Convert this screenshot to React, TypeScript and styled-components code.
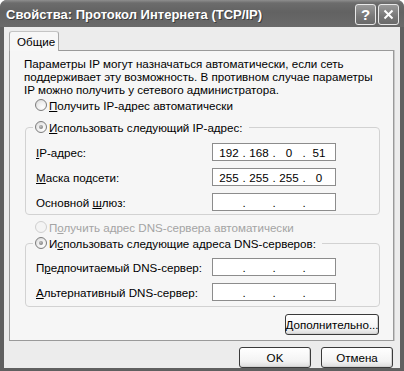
import React from "react";
import styled, { createGlobalStyle } from "styled-components";

const GlobalStyle = createGlobalStyle`
  html, body {
    margin: 0;
    padding: 0;
    background: #ffffff;
  }
  body {
    font-family: "Liberation Sans", Arial, sans-serif;
    font-size: 11.6px;
    color: #000;
  }
`;

const Window = styled.div`
  width: 404px;
  height: 371px;
  box-sizing: border-box;
  display: flex;
  flex-direction: column;
  background: #606060;
  border-radius: 7px 7px 0 0;
  overflow: hidden;
`;

const TitleBar = styled.div`
  height: 27px;
  flex: none;
  display: flex;
  align-items: center;
  padding: 0 5px 0 6px;
  background: linear-gradient(#8e8e8e 0, #6c6c6c 3px, #626262 45%, #6a6a6a 100%);
`;

const Title = styled.div`
  flex: 1;
  color: #fff;
  font-weight: bold;
  font-size: 13px;
  padding-top: 2px;
  text-shadow: 1px 1px 0 #3c3c3c;
  white-space: nowrap;
`;

const CaptionButton = styled.div`
  width: 19px;
  height: 19px;
  margin-left: 2px;
  margin-top: 2px;
  border: 1px solid #e8e8e8;
  border-radius: 3px;
  background: linear-gradient(#9a9a9a, #777 60%, #6a6a6a);
  display: flex;
  align-items: center;
  justify-content: center;
  color: #fff;
  font-weight: bold;
  font-size: 15px;
`;

const Body = styled.div`
  flex: 1;
  margin: 0 4px 3px 4px;
  background: #ececec;
  padding: 4px 6px 0 5px;
  display: flex;
  flex-direction: column;
`;

const TabRow = styled.div`
  display: flex;
  height: 19px;
`;

const Tab = styled.div`
  position: relative;
  z-index: 1;
  width: 50px;
  height: 20px;
  box-sizing: border-box;
  border: 1px solid #a8a8a8;
  border-bottom: none;
  border-top-color: #c4c4c4;
  border-radius: 3px 3px 0 0;
  background: #f7f7f7;
  padding-left: 7px;
  line-height: 19px;
`;

const Panel = styled.div`
  border: 1px solid #9a9a9a;
  box-shadow: 1px 0 0 #c8c8c8;
  background: #f6f6f6;
  padding: 6px 13px 5px 14px;
  display: flex;
  flex-direction: column;
  height: 291px;
  box-sizing: border-box;
`;

const Text = styled.p`
  margin: 0;
  line-height: 13px;
`;

const RadioRow = styled.div<{ $gap?: number; $disabled?: boolean }>`
  display: flex;
  align-items: center;
  gap: 2px;
  height: 14px;
  margin-top: ${(p) => p.$gap ?? 0}px;
  padding-left: 11px;
  color: ${(p) => (p.$disabled ? "#a4a4a4" : "#000")};
  white-space: nowrap;
`;

const Circle = styled.span<{ $checked?: boolean; $disabled?: boolean }>`
  width: 12px;
  height: 12px;
  box-sizing: border-box;
  border-radius: 50%;
  border: 1px solid ${(p) => (p.$disabled ? "#cfcfcf" : "#7c7c7c")};
  background: ${(p) =>
    p.$disabled
      ? "#f4f4f4"
      : "radial-gradient(circle at 65% 70%, #fdfdfd 0, #f0f0f0 45%, #d4d4d4 100%)"};
  display: flex;
  align-items: center;
  justify-content: center;
  flex: none;

  &::after {
    content: "";
    display: ${(p) => (p.$checked ? "block" : "none")};
    width: 4px;
    height: 4px;
    border-radius: 50%;
    background: radial-gradient(circle at 40% 35%, #bdbdbd, #6e6e6e);
  }
`;

const Key = styled.span`
  text-decoration: underline;
`;

const Group = styled.fieldset<{ $gap: number; $top: number; $bottom: number }>`
  margin: ${(p) => p.$gap}px 0 0 1px;
  border: 1px solid #d2d2d2;
  border-radius: 4px;
  padding: ${(p) => `${p.$top}px 0 ${p.$bottom}px 7px`};
  min-width: 0;
`;

const Legend = styled.legend`
  padding: 0 6px 0 2px;
  height: 14px;
  display: flex;
  align-items: center;
  gap: 2px;
  white-space: nowrap;
`;

const Rows = styled.div`
  display: flex;
  flex-direction: column;
  gap: 7px;
  padding-left: 3px;
`;

const FieldRow = styled.div`
  display: flex;
  align-items: center;
  height: 18px;
`;

const Label = styled.span`
  width: 176px;
  flex: none;
`;

const IpBox = styled.div`
  width: 124px;
  height: 18px;
  box-sizing: border-box;
  border: 1px solid #8c8c8c;
  background: #fff;
  display: flex;
  align-items: center;
  padding-left: 3px;
`;

const Seg = styled.span`
  width: 26px;
  text-align: center;
`;

const Dot = styled.span`
  width: 4px;
  text-align: center;
`;

const ButtonRow = styled.div<{ $gap: number }>`
  display: flex;
  justify-content: flex-end;
  gap: 10px;
  margin-top: ${(p) => p.$gap}px;
  margin-right: 1px;
`;

const Button = styled.div<{ $width: number }>`
  width: ${(p) => p.$width}px;
  height: 21px;
  box-sizing: border-box;
  border: 1px solid #3a3a3a;
  border-radius: 3px;
  background: linear-gradient(#ffffff, #f3f3f3 70%, #dcdcdc);
  box-shadow: inset -1px -1px 0 #d2d2d2;
  display: flex;
  align-items: center;
  justify-content: center;
`;

const Ip = ({ value }: { value: string[] }) => (
  <IpBox>
    {value.map((s, i) => (
      <React.Fragment key={i}>
        {i > 0 && <Dot>.</Dot>}
        <Seg>{s}</Seg>
      </React.Fragment>
    ))}
  </IpBox>
);

const empty = ["", "", "", ""];

export default function App() {
  return (
    <>
      <GlobalStyle />
      <Window>
        <TitleBar>
          <Title>Свойства: Протокол Интернета (TCP/IP)</Title>
          <CaptionButton>?</CaptionButton>
          <CaptionButton>
            <svg width="11" height="11" viewBox="0 0 11 11">
              <path d="M1.5 1.5 L9.5 9.5 M9.5 1.5 L1.5 9.5" stroke="#fff" strokeWidth="2" />
            </svg>
          </CaptionButton>
        </TitleBar>
        <Body>
          <TabRow>
            <Tab>Общие</Tab>
          </TabRow>
          <Panel>
            <Text>
              Параметры IP могут назначаться автоматически, если сеть
              <br />
              поддерживает эту возможность. В противном случае параметры
              <br />
              IP можно получить у сетевого администратора.
            </Text>
            <RadioRow $gap={2}>
              <Circle />
              <span>
                <Key>П</Key>олучить IP-адрес автоматически
              </span>
            </RadioRow>
            <Group $gap={8} $top={9} $bottom={3}>
              <Legend>
                <Circle $checked />
                <span>
                  <Key>И</Key>спользовать следующий IP-адрес:
                </span>
              </Legend>
              <Rows>
                <FieldRow>
                  <Label>
                    <Key>I</Key>P-адрес:
                  </Label>
                  <Ip value={["192", "168", "0", "51"]} />
                </FieldRow>
                <FieldRow>
                  <Label>
                    <Key>М</Key>аска подсети:
                  </Label>
                  <Ip value={["255", "255", "255", "0"]} />
                </FieldRow>
                <FieldRow>
                  <Label>
                    Основной <Key>ш</Key>люз:
                  </Label>
                  <Ip value={empty} />
                </FieldRow>
              </Rows>
            </Group>
            <RadioRow $gap={5} $disabled>
              <Circle $disabled />
              <span>
                П<Key>о</Key>лучить адрес DNS-сервера автоматически
              </span>
            </RadioRow>
            <Group $gap={2} $top={8} $bottom={5}>
              <Legend>
                <Circle $checked />
                <span>
                  И<Key>с</Key>пользовать следующие адреса DNS-серверов:
                </span>
              </Legend>
              <Rows>
                <FieldRow>
                  <Label>
                    П<Key>р</Key>едпочитаемый DNS-сервер:
                  </Label>
                  <Ip value={empty} />
                </FieldRow>
                <FieldRow>
                  <Label>
                    <Key>А</Key>льтернативный DNS-сервер:
                  </Label>
                  <Ip value={empty} />
                </FieldRow>
              </Rows>
            </Group>
            <ButtonRow $gap={7}>
              <Button $width={94}>
                <span>
                  <Key>Д</Key>ополнительно...
                </span>
              </Button>
            </ButtonRow>
          </Panel>
          <ButtonRow $gap={6}>
            <Button $width={72}>OK</Button>
            <Button $width={72}>Отмена</Button>
          </ButtonRow>
        </Body>
      </Window>
    </>
  );
}
